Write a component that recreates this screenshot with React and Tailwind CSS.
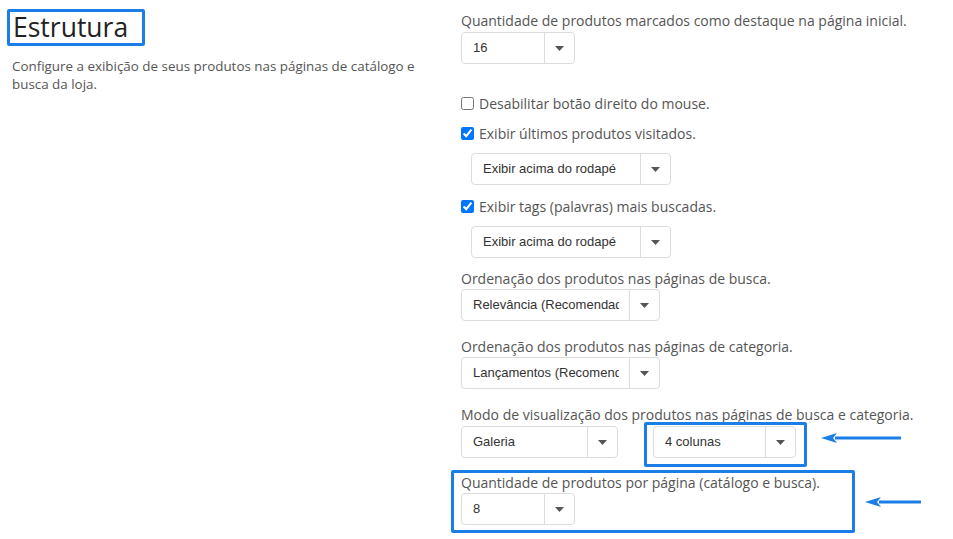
import React from 'react';

const font = { fontFamily: '"Open Sans", sans-serif' };

const Caret = () => (
  <svg width="9" height="5" viewBox="0 0 9 5" className="block">
    <path d="M0 0 H9 L4.5 5 Z" fill="#555" />
  </svg>
);

const Select = ({ value, width }) => (
  <div className={`flex h-[32px] rounded-[4px] border border-[#dcdcdc] bg-white ${width}`}>
    <span className="min-w-0 flex-1 pl-[11px] pr-[10px]">
      <span className="block overflow-hidden whitespace-nowrap font-['Liberation_Sans',Arial,sans-serif] text-[13px] leading-[30px] text-[#333]">
        {value}
      </span>
    </span>
    <span className="flex w-[30px] shrink-0 items-center justify-center border-l border-[#dcdcdc]">
      <Caret />
    </span>
  </div>
);

const Arrow = ({ width }) => (
  <svg width={width} height="10" viewBox={`0 0 ${width} 10`} className="block">
    <path d={`M14 5 H${width}`} stroke="#1a7ee6" strokeWidth="3" />
    <path d="M0 5 L16 0 L12 5 L16 10 Z" fill="#1a7ee6" />
  </svg>
);

const Check = ({ label, checked }) => (
  <label className="flex h-5 items-center gap-[5px] text-[14px] text-[#555]">
    <input type="checkbox" defaultChecked={checked} className="m-0 h-[13px] w-[13px]" />
    <span>{label}</span>
  </label>
);

const Label = ({ children, className = '' }) => (
  <div className={`text-[14px] leading-5 text-[#555] ${className}`}>{children}</div>
);

export default function App() {
  return (
    <div className="flex min-h-screen bg-white" style={font}>
      <div className="w-[451px] shrink-0">
        <div className="ml-[7px] mt-[9px] h-[37px] w-[138px] rounded-[2px] border-[3px] border-[#1a7ee6] pl-[3px] text-[26.5px] leading-[30px] text-[#222]">
          Estrutura
        </div>
        <p className="ml-3 mt-[11px] w-[425px] text-[13.4px] leading-[18px] text-[#555]">
          Configure a exibição de seus produtos nas páginas de catálogo e busca da loja.
        </p>
      </div>

      <div className="flex-1">
        <div className="pl-[10px]">
          <Label className="mt-[11px]">Quantidade de produtos marcados como destaque na página inicial.</Label>
          <div className="mt-[1px]">
            <Select value="16" width="w-[114px]" />
          </div>

          <div className="mt-[29px]">
            <Check label="Desabilitar botão direito do mouse." />
          </div>
          <div className="mt-[10px]">
            <Check label="Exibir últimos produtos visitados." checked />
          </div>
          <div className="ml-[10px] mt-[10px]">
            <Select value="Exibir acima do rodapé" width="w-[200px]" />
          </div>
          <div className="mt-[11px]">
            <Check label="Exibir tags (palavras) mais buscadas." checked />
          </div>
          <div className="ml-[10px] mt-[10px]">
            <Select value="Exibir acima do rodapé" width="w-[200px]" />
          </div>

          <Label className="mt-[11px]">Ordenação dos produtos nas páginas de busca.</Label>
          <Select value="Relevância (Recomendado)" width="w-[199px]" />

          <Label className="mt-[16px]">Ordenação dos produtos nas páginas de categoria.</Label>
          <Select value="Lançamentos (Recomendado)" width="w-[199px]" />

          <Label className="mt-[16px]">Modo de visualização dos produtos nas páginas de busca e categoria.</Label>
          <div className="mt-[1px] flex items-start">
            <Select value="Galeria" width="w-[157px]" />
            <div className="relative ml-[35px]">
              <Select value="4 colunas" width="w-[143px]" />
              <div className="pointer-events-none absolute -left-[9px] -right-[11px] -top-[4px] -bottom-[9px] rounded-[2px] border-[3px] border-[#1a7ee6]" />
            </div>
            <div className="ml-[25px] mt-[7px]">
              <Arrow width={80} />
            </div>
          </div>
        </div>

        <div className="mt-[12px] flex items-center">
          <div className="h-[63px] w-[404px] rounded-[2px] border-[3px] border-[#1a7ee6] pl-[7px]">
            <Label>Quantidade de produtos por página (catálogo e busca).</Label>
            <Select value="8" width="w-[114px]" />
          </div>
          <div className="ml-[10px]">
            <Arrow width={56} />
          </div>
        </div>
      </div>
    </div>
  );
}
